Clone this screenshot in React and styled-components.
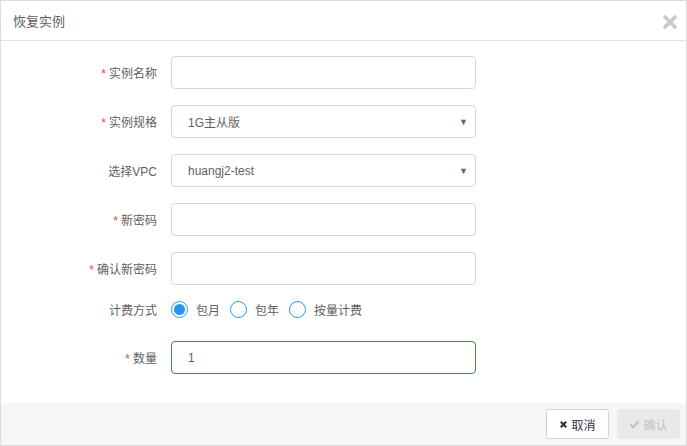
import styled, { createGlobalStyle } from "styled-components";

const GlobalStyle = createGlobalStyle`
  html, body {
    margin: 0;
    padding: 0;
    background: #fff;
  }
  body {
    font-family: "Liberation Sans", "Noto Sans CJK SC", sans-serif;
  }
`;

const Modal = styled.div`
  width: 687px;
  height: 446px;
  box-sizing: border-box;
  border: 1px solid #dcdcdc;
  display: flex;
  flex-direction: column;
  background: #fff;
`;

const Header = styled.div`
  height: 39px;
  border-bottom: 1px solid #e2e2e2;
  display: flex;
  align-items: center;
  justify-content: space-between;
  padding: 0 9px 0 12px;
`;

const Title = styled.div`
  font-size: 13px;
  color: #5f5f5f;
`;

const Close = styled.svg`
  width: 14px;
  height: 14px;
  margin-top: 2px;
`;

const Body = styled.div`
  flex: 1;
  padding-top: 15px;
  display: flex;
  flex-direction: column;
`;

const Row = styled.div`
  display: flex;
  align-items: center;
  height: ${(p) => p.$h || 33}px;
  margin-bottom: ${(p) => p.$mb ?? 16}px;
`;

const Label = styled.div`
  width: 156px;
  text-align: right;
  padding-right: 14px;
  box-sizing: content-box;
  font-size: 12px;
  color: #5f5f5f;
`;

const Star = styled.span`
  color: #e5453f;
  margin-right: 3px;
`;

const Input = styled.div`
  width: 305px;
  height: 33px;
  box-sizing: border-box;
  border: 1px solid ${(p) => (p.$ok ? "#418a3c" : "#cfd9e6")};
  border-radius: 4px;
  display: flex;
  align-items: center;
  justify-content: space-between;
  padding: 0 7px 0 16px;
  font-size: 12px;
  color: #5f5f5f;
  font-family: "Liberation Sans", "Noto Sans CJK SC", sans-serif;
`;

const Caret = styled.span`
  font-size: 9px;
  color: #666;
  margin-top: 1px;
`;

const Radios = styled.div`
  display: flex;
  align-items: center;
`;

const RadioItem = styled.label`
  display: flex;
  align-items: center;
  font-size: 12px;
  color: #5f5f5f;
  margin-right: 10px;
`;

const Circle = styled.span`
  width: 15px;
  height: 15px;
  border: 1.5px solid #2196f3;
  border-radius: 50%;
  margin-right: 8px;
  display: flex;
  align-items: center;
  justify-content: center;

  &::after {
    content: "";
    width: 11px;
    height: 11px;
    border-radius: 50%;
    background: ${(p) => (p.$on ? "#2196f3" : "transparent")};
  }
`;

const Footer = styled.div`
  height: 42px;
  background: #f6f6f6;
  display: flex;
  align-items: center;
  justify-content: flex-end;
  padding-right: 6px;
  gap: 8px;
`;

const Button = styled.button`
  width: 63px;
  height: 30px;
  border-radius: 3px;
  border: 1px solid ${(p) => (p.disabled ? "#e8e9eb" : "#c9d4e0")};
  background: ${(p) => (p.disabled ? "#e8e9eb" : "#fff")};
  color: ${(p) => (p.disabled ? "#c2c2c2" : "#333")};
  font-size: 12px;
  font-family: "Liberation Sans", "Noto Sans CJK SC", sans-serif;
  display: flex;
  align-items: center;
  justify-content: center;
  gap: 3px;
  padding: 0;
`;

const rows = [
  { label: "实例名称", req: true },
  { label: "实例规格", req: true, value: "1G主从版", select: true },
  { label: "选择VPC", value: "huangj2-test", select: true },
  { label: "新密码", req: true },
  { label: "确认新密码", req: true },
];

export default function App() {
  return (
    <>
      <GlobalStyle />
      <Modal>
        <Header>
          <Title>恢复实例</Title>
          <Close viewBox="0 0 14 14">
            <path d="M2 2 L12 12 M12 2 L2 12" stroke="#cacaca" strokeWidth="3.6" strokeLinecap="round" />
          </Close>
        </Header>
        <Body>
          {rows.map((r) => (
            <Row key={r.label}>
              <Label>
                {r.req && <Star>*</Star>}
                {r.label}
              </Label>
              <Input>
                <span>{r.value}</span>
                {r.select && <Caret>▼</Caret>}
              </Input>
            </Row>
          ))}
          <Row $h={16} $mb={24}>
            <Label>计费方式</Label>
            <Radios>
              <RadioItem>
                <Circle $on />
                包月
              </RadioItem>
              <RadioItem>
                <Circle />
                包年
              </RadioItem>
              <RadioItem>
                <Circle />
                按量计费
              </RadioItem>
            </Radios>
          </Row>
          <Row>
            <Label>
              <Star>*</Star>数量
            </Label>
            <Input $ok>1</Input>
          </Row>
        </Body>
        <Footer>
          <Button>
            <svg width="9" height="9" viewBox="0 0 10 10">
              <path d="M2 2 L8 8 M8 2 L2 8" stroke="#333" strokeWidth="2.4" />
            </svg>
            取消
          </Button>
          <Button disabled>
            <svg width="11" height="9" viewBox="0 0 12 10">
              <path d="M1.5 5 L4.5 8 L10.5 1.5" stroke="#c2c2c2" strokeWidth="2.4" fill="none" />
            </svg>
            确认
          </Button>
        </Footer>
      </Modal>
    </>
  );
}
